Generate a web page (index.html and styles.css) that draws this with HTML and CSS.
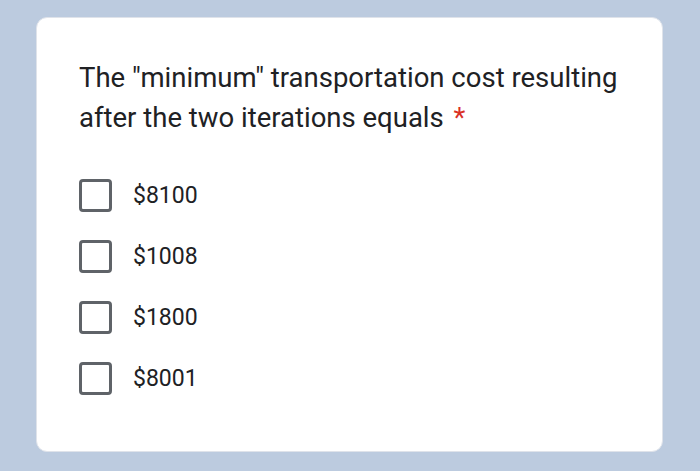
FILE: index.html
```html
<!DOCTYPE html>
<html>
<head>
<meta charset="utf-8">
<link rel="stylesheet" href="styles.css">
</head>
<body>
<div class="card">
  <div class="question">The "minimum" transportation cost resulting after the two iterations equals <span class="req">*</span></div>
  <div class="options">
    <label class="option"><span class="box"></span><span class="label">$8100</span></label>
    <label class="option"><span class="box"></span><span class="label">$1008</span></label>
    <label class="option"><span class="box"></span><span class="label">$1800</span></label>
    <label class="option"><span class="box"></span><span class="label">$8001</span></label>
  </div>
</div>
</body>
</html>
```
FILE: styles.css
```css
html, body {
  margin: 0;
  padding: 0;
}
body {
  background: #bccbdf;
  width: 700px;
  height: 471px;
  overflow: hidden;
  font-family: Roboto, "Liberation Sans", sans-serif;
  color: #202124;
}
.card {
  margin: 17px 0 0 36px;
  width: 627px;
  height: 435px;
  box-sizing: border-box;
  background: #fff;
  border: 1px solid #dfe3ea;
  border-radius: 11px;
  padding: 40px 42px 0 42px;
}
.question {
  font-size: 27.5px;
  line-height: 40px;
  width: 550px;
}
.req {
  color: #d93025;
  margin-left: 3px;
}
.options {
  margin-top: 41px;
  display: flex;
  flex-direction: column;
  gap: 28px;
}
.option {
  display: flex;
  align-items: center;
  gap: 21px;
  height: 33px;
}
.box {
  width: 33px;
  height: 33px;
  box-sizing: border-box;
  border: 3px solid #5f6368;
  border-radius: 4px;
}
.label {
  font-size: 23px;
}
```
